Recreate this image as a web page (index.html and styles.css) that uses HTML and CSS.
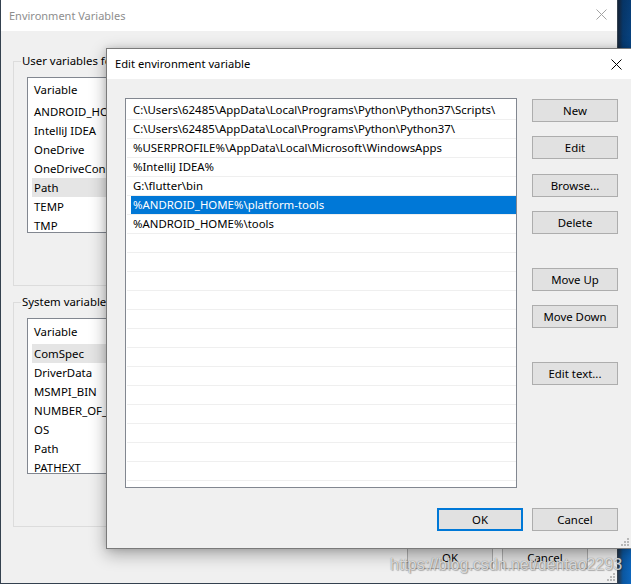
FILE: index.html
```html
<!DOCTYPE html>
<html lang="en">
<head>
<meta charset="utf-8">
<title>Edit environment variable</title>
<link rel="stylesheet" href="styles.css">
</head>
<body>
<div class="desktop">
  <section class="win outer">
    <header class="titlebar">
      <span class="title inactive">Environment Variables</span>
      <span class="close inactive">
        <svg width="11" height="11" viewBox="0 0 11 11"><path d="M0.5 0.5 L10.5 10.5 M10.5 0.5 L0.5 10.5" stroke="#a3a3a3" stroke-width="1" fill="none"/></svg>
      </span>
    </header>
    <div class="outer-body">
      <div class="group">
        <span class="group-label">User variables for 62485</span>
        <div class="vlist">
          <div class="vlist-head">Variable</div>
          <div class="vrow">ANDROID_HOME</div>
          <div class="vrow">IntelliJ IDEA</div>
          <div class="vrow">OneDrive</div>
          <div class="vrow">OneDriveConsumer</div>
          <div class="vrow sel">Path</div>
          <div class="vrow">TEMP</div>
          <div class="vrow">TMP</div>
        </div>
      </div>
      <div class="group">
        <span class="group-label">System variables</span>
        <div class="vlist">
          <div class="vlist-head tall">Variable</div>
          <div class="vrow sel">ComSpec</div>
          <div class="vrow">DriverData</div>
          <div class="vrow">MSMPI_BIN</div>
          <div class="vrow">NUMBER_OF_PROCESSORS</div>
          <div class="vrow">OS</div>
          <div class="vrow">Path</div>
          <div class="vrow">PATHEXT</div>
        </div>
      </div>
      <div class="outer-buttons">
        <button class="btn">OK</button>
        <button class="btn">Cancel</button>
      </div>
    </div>
    <span class="grip outer-grip">
      <svg width="8" height="8" viewBox="0 0 8 8"><g fill="#b8b8b8"><rect x="6" y="0" width="2" height="2"/><rect x="3" y="3" width="2" height="2"/><rect x="6" y="3" width="2" height="2"/><rect x="0" y="6" width="2" height="2"/><rect x="3" y="6" width="2" height="2"/><rect x="6" y="6" width="2" height="2"/></g></svg>
    </span>
  </section>

  <section class="win dialog">
    <header class="titlebar">
      <span class="title">Edit environment variable</span>
      <span class="close">
        <svg width="11" height="11" viewBox="0 0 11 11"><path d="M0.5 0.5 L10.5 10.5 M10.5 0.5 L0.5 10.5" stroke="#000" stroke-width="1" fill="none"/></svg>
      </span>
    </header>
    <div class="dialog-body">
      <div class="plist">
        <div class="prow"><span class="ptext">C:\Users\62485\AppData\Local\Programs\Python\Python37\Scripts\</span></div>
        <div class="prow"><span class="ptext">C:\Users\62485\AppData\Local\Programs\Python\Python37\</span></div>
        <div class="prow"><span class="ptext">%USERPROFILE%\AppData\Local\Microsoft\WindowsApps</span></div>
        <div class="prow"><span class="ptext">%IntelliJ IDEA%</span></div>
        <div class="prow"><span class="ptext">G:\flutter\bin</span></div>
        <div class="prow selected"><span class="ptext">%ANDROID_HOME%\platform-tools</span></div>
        <div class="prow"><span class="ptext">%ANDROID_HOME%\tools</span></div>
        <div class="prow"><span class="ptext"></span></div>
        <div class="prow"><span class="ptext"></span></div>
        <div class="prow"><span class="ptext"></span></div>
        <div class="prow"><span class="ptext"></span></div>
        <div class="prow"><span class="ptext"></span></div>
        <div class="prow"><span class="ptext"></span></div>
        <div class="prow"><span class="ptext"></span></div>
        <div class="prow"><span class="ptext"></span></div>
        <div class="prow"><span class="ptext"></span></div>
        <div class="prow"><span class="ptext"></span></div>
        <div class="prow"><span class="ptext"></span></div>
        <div class="prow"><span class="ptext"></span></div>
        <div class="prow"><span class="ptext"></span></div>
      </div>
      <div class="side-buttons">
        <button class="btn">New</button>
        <button class="btn">Edit</button>
        <button class="btn nudge">Browse...</button>
        <button class="btn">Delete</button>
        <button class="btn sep">Move Up</button>
        <button class="btn">Move Down</button>
        <button class="btn sep">Edit text...</button>
      </div>
      <div class="dialog-buttons">
        <button class="btn default">OK</button>
        <button class="btn">Cancel</button>
      </div>
    </div>
    <span class="grip dialog-grip">
      <svg width="8" height="8" viewBox="0 0 8 8"><g fill="#b8b8b8"><rect x="6" y="0" width="2" height="2"/><rect x="3" y="3" width="2" height="2"/><rect x="6" y="3" width="2" height="2"/><rect x="0" y="6" width="2" height="2"/><rect x="3" y="6" width="2" height="2"/><rect x="6" y="6" width="2" height="2"/></g></svg>
    </span>
  </section>

  <div class="watermark">https://blog.csdn.net/dentao2293</div>
</div>
</body>
</html>
```

FILE: styles.css
```css
* { box-sizing: border-box; }

html, body {
  margin: 0;
  padding: 0;
}

body {
  width: 631px;
  height: 584px;
  overflow: hidden;
  font-family: "Noto Sans", "Open Sans", sans-serif;
  font-size: 11.4px;
  color: #000;
}

.desktop {
  position: relative;
  width: 631px;
  height: 584px;
  overflow: hidden;
  background:
    linear-gradient(180deg, rgba(0, 10, 30, 0.45) 0px, rgba(0, 10, 30, 0) 260px),
    linear-gradient(90deg, #233b55 0px, #233b55 619px, #0b57a0 623px, #0d66bd 631px);
}

.win {
  position: absolute;
  display: flex;
  flex-direction: column;
  background: #f0f0f0;
}

/* ---------- outer window ---------- */
.outer {
  left: 0;
  top: 0;
  width: 618px;
  height: 584px;
  border-left: 1px solid #34414f;
  border-right: 1px solid #34414f;
  border-bottom: 1px solid #34414f;
}

.titlebar {
  height: 30px;
  flex: none;
  background: #fff;
  display: flex;
  align-items: center;
  justify-content: space-between;
}

.outer .titlebar {
  height: 31px;
  padding-left: 8px;
}

.title {
  font-size: 11.2px;
  line-height: 16px;
  white-space: nowrap;
}

.title.inactive {
  color: #8e8e8e;
  font-size: 11px;
}

.close {
  width: 32px;
  height: 30px;
  display: flex;
  align-items: center;
  justify-content: center;
}

.outer .close {
  width: 30px;
  margin-right: 1px;
  padding-bottom: 2px;
}

.close svg { display: block; }

.outer-body {
  flex: 1;
  display: flex;
  flex-direction: column;
  padding: 30px 12px 0 12px;
}

.group {
  height: 225px;
  border: 1px solid #dcdcdc;
  display: flex;
  flex-direction: column;
  padding: 0 12px 0 13px;
}

.group + .group {
  margin-top: 16px;
}

.group-label {
  align-self: flex-start;
  margin: -9px 0 0 -6px;
  padding: 0 1px;
  line-height: 16px;
  background: #f0f0f0;
  white-space: nowrap;
}

.vlist {
  margin-top: 8px;
  height: 156px;
  border: 1px solid #828790;
  background: #fff;
  overflow: hidden;
  display: flex;
  flex-direction: column;
}

.vlist-head {
  flex: none;
  height: 24px;
  line-height: 24px;
  padding-left: 6px;
}

.vlist-head.tall {
  height: 25px;
  line-height: 25px;
}

.vrow {
  flex: none;
  height: 19px;
  line-height: 19px;
  margin-left: 4px;
  padding-left: 2px;
  white-space: nowrap;
}

.vrow.sel {
  background: #e5e5e5;
}

.outer-buttons {
  margin-top: 19px;
  display: flex;
  justify-content: flex-end;
  gap: 9px;
  padding-right: 17px;
}

.grip {
  position: absolute;
  display: block;
  width: 8px;
  height: 8px;
}

.grip svg { display: block; }

.outer-grip {
  right: 2px;
  bottom: 2px;
}

/* ---------- buttons ---------- */
.btn {
  width: 86px;
  height: 23px;
  padding: 0;
  margin: 0;
  font: inherit;
  line-height: 19px;
  color: #000;
  background: #e1e1e1;
  border: 1px solid #adadad;
  border-radius: 0;
  text-align: center;
}

.btn.default {
  border: 2px solid #0078d7;
}

/* ---------- edit dialog ---------- */
.dialog {
  left: 106px;
  top: 48px;
  width: 527px;
  height: 501px;
  border: 1px solid #7a7a7a;
  box-shadow: 0 5px 16px rgba(0, 0, 0, 0.33), 0 0 6px rgba(0, 0, 0, 0.12);
}

.dialog .titlebar {
  padding-left: 8px;
}

.dialog-body {
  flex: 1;
  display: grid;
  grid-template-columns: 392px 86px;
  grid-template-rows: 390px 23px;
  column-gap: 15px;
  row-gap: 20px;
  padding: 19px 14px 17px 18px;
}

.plist {
  border: 1px solid #828790;
  background: #fff;
  padding-top: 2px;
  overflow: hidden;
  display: flex;
  flex-direction: column;
}

.prow {
  flex: none;
  height: 19px;
  display: flex;
  border-bottom: 1px solid #efefef;
  margin-left: 1px;
}

.ptext {
  flex: 1;
  margin-left: 4px;
  padding-left: 2px;
  line-height: 18px;
  white-space: nowrap;
}

.prow.selected .ptext {
  background: #0078d7;
  color: #fff;
}

.side-buttons {
  display: flex;
  flex-direction: column;
  gap: 14px;
  padding-top: 1px;
}

.side-buttons .nudge {
  margin-top: 1px;
}

.side-buttons .sep {
  margin-top: 20px;
}

.dialog-buttons {
  grid-column: 1 / 3;
  display: flex;
  justify-content: flex-end;
  gap: 9px;
}

.dialog-grip {
  right: 3px;
  bottom: 2px;
}

/* ---------- watermark ---------- */
.watermark {
  position: absolute;
  left: 390px;
  top: 556px;
  font-family: "Liberation Sans", Arial, sans-serif;
  font-size: 16px;
  line-height: 18px;
  white-space: nowrap;
  color: rgba(255, 255, 255, 0.72);
  text-shadow: 0 0 1px rgba(90, 90, 90, 0.9), 1px 1px 1px rgba(0, 0, 0, 0.25);
  pointer-events: none;
}
```
